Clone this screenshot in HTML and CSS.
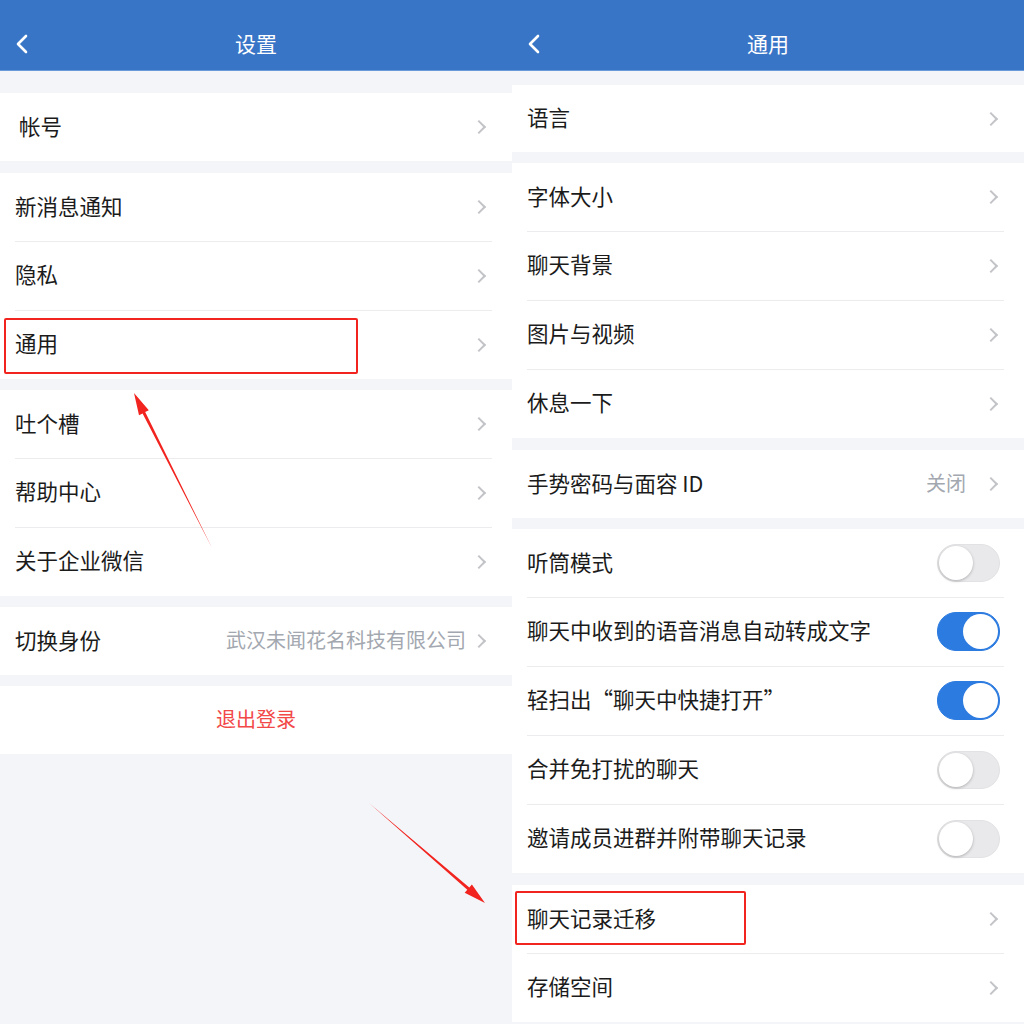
FILE: index.html
```html
<!DOCTYPE html>
<html lang="zh-CN">
<head>
<meta charset="utf-8">
<title>设置 / 通用</title>
<link rel="stylesheet" href="styles.css">
</head>
<body>
<div class="page">
  <section class="panel">
    <header class="navbar">
      <svg class="back" viewBox="0 0 14 20" width="14" height="20"><path d="M11 2 L3 10 L11 18" fill="none" stroke="#fff" stroke-width="2.6" stroke-linecap="round" stroke-linejoin="round"/></svg>
      <h1 class="title">设置</h1>
    </header>
    <div class="group gap-22">
      <div class="row row-first"><span class="label">帐号</span><span class="chev"></span></div>
    </div>
    <div class="group gap-12">
      <div class="row"><span class="label">新消息通知</span><span class="chev"></span></div>
      <div class="row"><span class="label">隐私</span><span class="chev"></span></div>
      <div class="row"><span class="label">通用</span><span class="chev"></span></div>
    </div>
    <div class="group gap-11">
      <div class="row"><span class="label">吐个槽</span><span class="chev"></span></div>
      <div class="row"><span class="label">帮助中心</span><span class="chev"></span></div>
      <div class="row"><span class="label">关于企业微信</span><span class="chev"></span></div>
    </div>
    <div class="group gap-11">
      <div class="row"><span class="label">切换身份</span><span class="value value-tight">武汉未闻花名科技有限公司</span><span class="chev"></span></div>
    </div>
    <div class="group gap-11">
      <div class="row row-center"><span class="logout">退出登录</span></div>
    </div>
  </section>

  <section class="panel">
    <header class="navbar">
      <svg class="back" viewBox="0 0 14 20" width="14" height="20"><path d="M11 2 L3 10 L11 18" fill="none" stroke="#fff" stroke-width="2.6" stroke-linecap="round" stroke-linejoin="round"/></svg>
      <h1 class="title">通用</h1>
    </header>
    <div class="group gap-14">
      <div class="row row-short"><span class="label">语言</span><span class="chev"></span></div>
    </div>
    <div class="group gap-11">
      <div class="row"><span class="label">字体大小</span><span class="chev"></span></div>
      <div class="row"><span class="label">聊天背景</span><span class="chev"></span></div>
      <div class="row"><span class="label">图片与视频</span><span class="chev"></span></div>
      <div class="row"><span class="label">休息一下</span><span class="chev"></span></div>
    </div>
    <div class="group gap-12">
      <div class="row"><span class="label">手势密码与面容 ID</span><span class="value value-wide">关闭</span><span class="chev"></span></div>
    </div>
    <div class="group gap-11">
      <div class="row"><span class="label">听筒模式</span><span class="toggle"></span></div>
      <div class="row"><span class="label">聊天中收到的语音消息自动转成文字</span><span class="toggle on"></span></div>
      <div class="row"><span class="label">轻扫出“聊天中快捷打开”</span><span class="toggle on"></span></div>
      <div class="row"><span class="label">合并免打扰的聊天</span><span class="toggle"></span></div>
      <div class="row"><span class="label">邀请成员进群并附带聊天记录</span><span class="toggle"></span></div>
    </div>
    <div class="group gap-12">
      <div class="row"><span class="label">聊天记录迁移</span><span class="chev"></span></div>
      <div class="row"><span class="label">存储空间</span><span class="chev"></span></div>
    </div>
  </section>

  <div class="mark mark-1"></div>
  <div class="mark mark-2"></div>
  <svg class="arrows" viewBox="0 0 1024 1024" width="1024" height="1024">
    <polygon fill="#f2241f" points="134,393 148.8,410.2 145.2,412 212,548 142.6,413.4 139,415.2"/>
    <polygon fill="#f2241f" points="485,903 471.9,884.4 469.3,887.5 369,803 467.3,889.7 464.7,892.8"/>
  </svg>
</div>
</body>
</html>
```

FILE: styles.css
```css
* { box-sizing: border-box; margin: 0; padding: 0; }
html, body { width: 1024px; height: 1024px; overflow: hidden; }
body {
  background: #f4f5f9;
  font-family: "Noto Sans CJK SC", "Noto Sans", sans-serif;
  color: #1b1b1b;
}
.page {
  position: relative;
  display: flex;
  width: 1024px;
  height: 1024px;
}
.panel {
  width: 512px;
  display: flex;
  flex-direction: column;
  background: #f4f5f9;
}
.navbar {
  height: 71px;
  background: #3975c6;
  border-bottom: 1px solid #6a9ad8;
  display: flex;
  align-items: center;
  justify-content: center;
  position: relative;
  padding-top: 16px;
}
.back {
  position: absolute;
  left: 15px;
  top: 34px;
}
.title {
  font-size: 21px;
  font-weight: 400;
  color: #fff;
  line-height: 1;
}
.group {
  background: #fff;
  display: flex;
  flex-direction: column;
}
.gap-22 { margin-top: 22px; }
.gap-14 { margin-top: 14px; }
.gap-12 { margin-top: 12px; }
.gap-11 { margin-top: 11px; }
.row {
  height: 68px;
  display: flex;
  align-items: center;
  padding: 0 26px 0 15px;
  position: relative;
  font-size: 21.5px;
}
.row + .row { height: 69px; }
.row + .row::before {
  content: "";
  position: absolute;
  top: 0;
  left: 15px;
  right: 20px;
  height: 1px;
  background: #ececee;
}
.row-first { padding-left: 19px; }
.row-short { height: 67px; }
.label { flex: 1; white-space: nowrap; line-height: 1; padding-bottom: 3px; }
.value {
  color: #a3a8b0;
  white-space: nowrap;
  font-size: 20px;
  line-height: 1;
  padding-bottom: 2px;
}
.value-tight { margin-right: 8px; }
.value-wide { margin-right: 20px; }
.chev {
  width: 10px;
  height: 10px;
  border-top: 2px solid #c3c4c8;
  border-right: 2px solid #c3c4c8;
  transform: rotate(45deg);
  margin-right: 2px;
}
.row-center { justify-content: center; padding: 0; }
.logout {
  color: #f24848;
  font-size: 20px;
  line-height: 1;
  padding-bottom: 2px;
}
.toggle {
  width: 63px;
  height: 38px;
  border-radius: 19px;
  background: #e9e9eb;
  border: 1px solid #e2e2e4;
  position: relative;
  margin-right: -2px;
}
.toggle::after {
  content: "";
  position: absolute;
  left: 1px;
  top: 1px;
  width: 34px;
  height: 34px;
  border-radius: 50%;
  background: #fff;
  box-shadow: 0 1px 3px rgba(0,0,0,0.25);
}
.toggle.on {
  background: #2c7be0;
  border-color: #2c7be0;
  height: 39px;
}
.toggle.on::after {
  left: auto;
  right: 1px;
  width: 35px;
  height: 35px;
  box-shadow: none;
}
.mark {
  position: absolute;
  border: 2px solid #f2241f;
  border-radius: 2px;
}
.mark-1 { left: 4px; top: 318px; width: 354px; height: 56px; }
.mark-2 { left: 515px; top: 891px; width: 231px; height: 54px; }
.arrows {
  position: absolute;
  left: 0;
  top: 0;
  pointer-events: none;
}
```
